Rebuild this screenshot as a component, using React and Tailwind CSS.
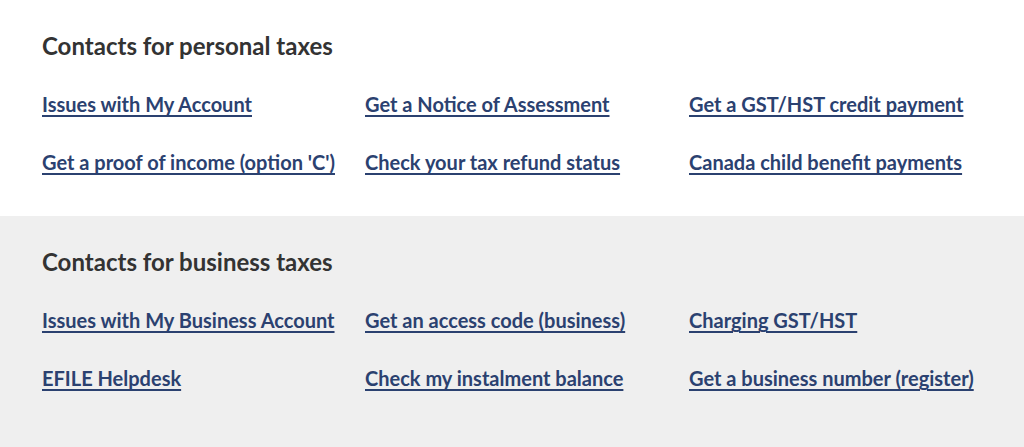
import React from 'react';

// -----------------------------------------------------------------------------
// DADOS
// -----------------------------------------------------------------------------
const sections = [
    {
        title: 'Contacts for personal taxes',
        bg: 'bg-white',
        links: [
            'Issues with My Account',
            'Get a Notice of Assessment',
            'Get a GST/HST credit payment',
            "Get a proof of income (option 'C')",
            'Check your tax refund status',
            'Canada child benefit payments',
        ],
    },
    {
        title: 'Contacts for business taxes',
        bg: 'bg-[#efefef]',
        links: [
            'Issues with My Business Account',
            'Get an access code (business)',
            'Charging GST/HST',
            'EFILE Helpdesk',
            'Check my instalment balance',
            'Get a business number (register)',
        ],
    },
];

const Section = ({ title, bg, links }) => (
    <section className={`${bg} h-[216px] pl-[42px] pr-[12px] pt-[32px]`}>
        <h2 className="text-[24px] leading-[28px] font-bold text-[#333333]">{title}</h2>
        <ul className="grid grid-cols-[323px_324px_1fr] gap-y-[28px] mt-[30px]">
            {links.map((l) => (
                <li key={l} className="leading-[28px] whitespace-nowrap">
                    <a href="#" className="text-[20px] font-bold text-[#2b4170] underline decoration-[1.5px] underline-offset-[3px]">
                        {l}
                    </a>
                </li>
            ))}
        </ul>
    </section>
);

export default function App() {
    return (
        <main className="w-[1024px] h-[447px] overflow-hidden bg-[#efefef]" style={{ fontFamily: 'Lato, "Noto Sans", sans-serif' }}>
            {sections.map((s) => (
                <Section key={s.title} {...s} />
            ))}
        </main>
    );
}
